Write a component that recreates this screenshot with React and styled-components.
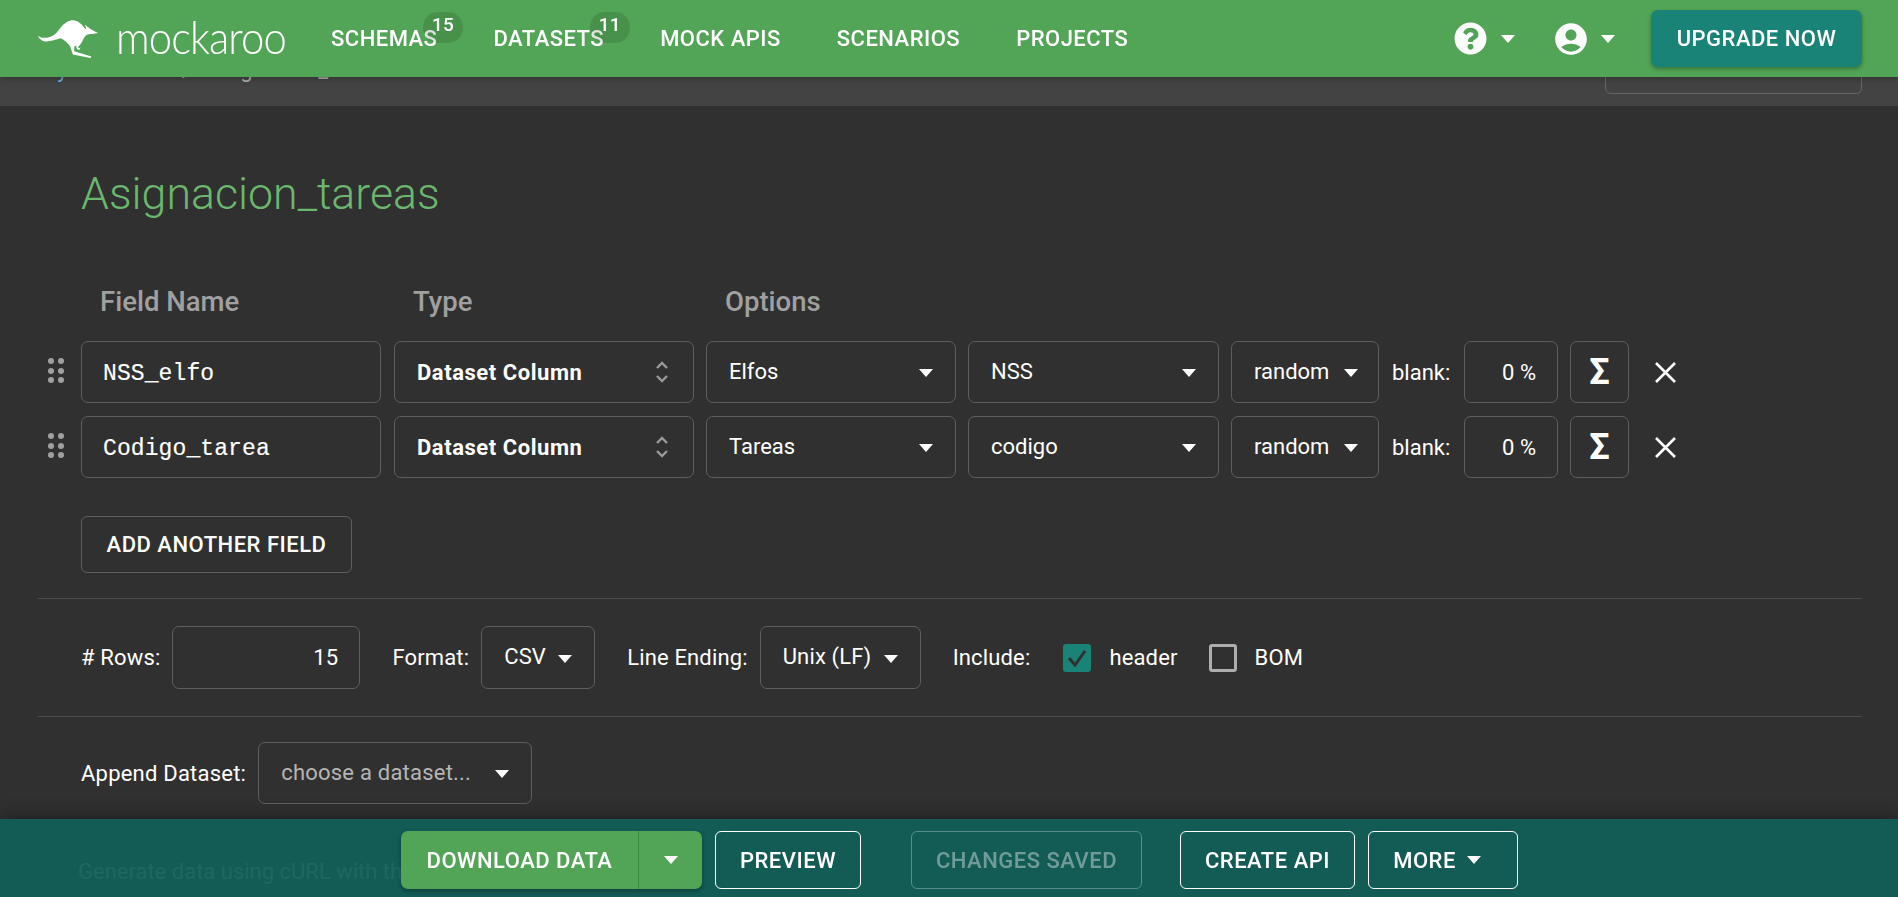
import React from "react";
import styled, { createGlobalStyle } from "styled-components";
import { FaQuestionCircle } from "react-icons/fa";
import { MdAccountCircle } from "react-icons/md";

const Global = createGlobalStyle`
  html, body { margin: 0; height: 100%; overflow: hidden; background: #303030; }
  body { font-family: Roboto, "Liberation Sans", sans-serif; font-size: 22px; color: #fff; }
  * { box-sizing: border-box; }
`;

const Header = styled.header`
  position: fixed; top: 0; left: 0; right: 0; z-index: 5;
  height: 77px; background: #52a556; display: flex; align-items: center;
  padding: 0 36px 0 38px; box-shadow: 0 2px 6px rgba(0,0,0,.25);
`;
const Logo = styled.div`
  display: flex; align-items: center; width: 293px; flex: none;
`;
const Wordmark = styled.span`
  font-family: Lato, sans-serif; font-weight: 300; font-size: 45px; line-height: 50px;
  letter-spacing: -1px; margin-left: 18px; display: inline-block;
  transform: scaleX(.93) translateY(-2px); transform-origin: left center;
`;
const Nav = styled.nav`
  display: flex; gap: 56px; flex: 1;
`;
const NavItem = styled.a`
  position: relative; font-weight: 500; font-size: 22px; letter-spacing: .48px; color: #fff;
  text-transform: uppercase; line-height: 24px; margin-top: 0;
`;
const Badge = styled.span`
  position: absolute; right: -26px; top: -15px; width: 40px; height: 31px; border-radius: 15px;
  background: rgba(0,0,0,.12); font-size: 19px; line-height: 26px; text-align: center;
  padding-right: 1px; letter-spacing: 0;
`;
const IconMenu = styled.div`
  display: flex; align-items: center; gap: 14px; margin-right: ${p => p.$mr}px; font-size: 33px; color: #fff;
  svg { display: block; }
`;
const Caret = styled.span`
  display: inline-block; width: 0; height: 0; flex: none;
  border-left: 7.5px solid transparent;
  border-right: 7.5px solid transparent;
  border-top: 8px solid #fff;
`;
const Upgrade = styled.button`
  width: 211px; height: 57px; border: 0; border-radius: 7px; background: #1a8378; color: #fff;
  font: 500 22px Roboto, sans-serif; letter-spacing: .5px;
  box-shadow: 0 2px 4px rgba(0,0,0,.3);
`;

const Band = styled.div`
  height: 106px; background: #434343; display: flex; align-items: flex-end;
  justify-content: space-between; padding: 0 36px 12px 38px;
`;
const Crumbs = styled.div`
  display: flex; height: 50px; align-items: center; gap: 18px; color: #aaa;
`;
const CrumbLink = styled.a` color: #6fa8dc; `;
const GhostBox = styled.div`
  width: 257px; height: 50px; border: 1px solid #666; border-radius: 6px;
`;

const Main = styled.main`
  padding: 0 36px 0 38px;
`;
const Title = styled.h1`
  margin: 64px 0 0 43px; font-weight: 300; font-size: 44.7px; line-height: 48px; color: #6bb76e;
`;
const ColumnLabels = styled.div`
  display: flex; margin: 72px 0 27px 43px; color: #a0a0a0; font-weight: 500; font-size: 27.5px; line-height: 24px;
`;
const ColumnLabel = styled.div`
  width: ${p => p.$w}px; padding-left: 19px;
`;
const Rows = styled.div`
  display: flex; flex-direction: column; gap: 13px;
`;
const Row = styled.div`
  display: flex; align-items: stretch; height: 62px;
`;
const Handle = styled.div`
  width: 43px; flex: none; padding: 17px 0 0 10px;
  display: grid; grid-template-columns: 6px 6px; grid-auto-rows: 6px; gap: 3.5px 3.5px;
  align-content: start;
  i { width: 6px; height: 6px; border-radius: 50%; background: #a0a0a0; }
`;
const Boxed = styled.div`
  border: 1px solid #5e5e5e; border-radius: 7px; display: flex; align-items: center; flex: none;
  width: ${p => p.$w}px; margin-left: ${p => p.$ml || 0}px;
  ${p => (p.$h ? `height: ${p.$h}px;` : "")}
`;
const NameField = styled(Boxed)`
  padding: 4px 0 0 21px; font-family: "Liberation Mono", monospace; font-size: 23px; letter-spacing: .1px;
  -webkit-text-stroke: .15px #fff;
`;
const TypeSelect = styled(Boxed)`
  padding: 0 24px 0 22px; justify-content: space-between; font-weight: 700; letter-spacing: .55px;
`;
const Select = styled(Boxed)`
  padding: 0 ${p => p.$pr ?? 22}px 2px 22px; justify-content: space-between;
  color: ${p => (p.$muted ? "#b5b5b5" : "#fff")};
  ${Caret} { margin-top: 4px; }
`;
const BlankLabel = styled.span`
  align-self: center; margin-left: 13px; width: 72px; flex: none;
`;
const Percent = styled(Boxed)`
  justify-content: flex-end; padding-right: 21px;
`;
const SumButton = styled(Boxed)`
  justify-content: center; font-size: 36px; font-weight: 700;
`;
const Remove = styled.button`
  background: none; border: 0; padding: 0; width: 72px; color: #fff; flex: none;
  display: flex; align-items: center; justify-content: center;
`;
const AddButton = styled.button`
  display: block; width: 271px; height: 57px; margin: 38px 0 25px 43px; background: none;
  border: 1px solid #5e5e5e; border-radius: 6px; color: #fff;
  font: 500 22px Roboto, sans-serif; letter-spacing: .5px;
`;
const Divider = styled.hr`
  margin: 0; border: 0; height: 1px; background: #4d4d4d;
`;
const OptionsRow = styled.div`
  display: flex; align-items: stretch; gap: 32px; padding: 27px 0 27px 43px; height: 117px;
  letter-spacing: .15px;
`;
const Group = styled.div`
  display: flex; align-items: center; gap: 12px;
`;
const RowsInput = styled(Boxed)`
  height: 63px; justify-content: flex-end; padding-right: 21px;
`;
const Check = styled.span`
  width: 28px; height: 28px; flex: none; border-radius: 3px; display: flex; align-items: center; justify-content: center;
  background: ${p => (p.$on ? "#1a8378" : "transparent")};
  border: ${p => (p.$on ? "0" : "3px solid #adadad")};
  margin: 0 6px 0 ${p => p.$ml}px;
`;
const AppendRow = styled.div`
  display: flex; align-items: center; gap: 12px; height: 62px; margin: 25px 0 0 43px;
  letter-spacing: .22px;
`;
const CurlNote = styled.p`
  margin: 56px 0 0 40px; line-height: 24px; color: #eee; white-space: nowrap;
`;

const Footer = styled.footer`
  position: fixed; left: 0; right: 0; bottom: 0; height: 78px; z-index: 4;
  background: rgba(17,93,87,.94); box-shadow: 0 0 18px rgba(0,0,0,.45);
  display: flex; padding: 12px 0 8px 401px;
`;
const Split = styled.div`
  display: flex; width: 301px; height: 58px; border-radius: 7px; background: #52a556; flex: none;
  box-shadow: 0 2px 4px rgba(0,0,0,.3); margin-right: 13px;
`;
const SplitMain = styled.div`
  width: 238px; display: flex; align-items: center; justify-content: center;
  border-right: 1px solid #3c8a44; font-weight: 500; letter-spacing: .5px;
`;
const SplitCaret = styled.div`
  flex: 1; display: flex; align-items: center; justify-content: center;
`;
const Outline = styled.div`
  height: 58px; width: ${p => p.$w}px; margin-right: ${p => p.$mr}px; flex: none;
  border: 1px solid ${p => (p.$off ? "rgba(255,255,255,.3)" : "#fff")}; border-radius: 6px;
  color: ${p => (p.$off ? "rgba(255,255,255,.4)" : "#fff")};
  display: flex; align-items: center; justify-content: center; gap: 11px;
  font-weight: 500; letter-spacing: .5px;
  padding-right: ${p => p.$shift || 0}px;
`;

const dots = [0, 1, 2, 3, 4, 5];
const Dots = () => (
  <Handle>{dots.map(d => <i key={d} />)}</Handle>
);
const Kangaroo = () => (
  <svg width="60" height="38" viewBox="27 33 181 114" fill="#fff">
    <path d="M27 80C40 90 60 88 75 78C90 68 100 40 125 34C145 30 160 45 168 58L172 60L169 47L185 60L208 72L190 75C180 74 172 76 166 86C160 98 156 106 150 112C146 118 150 120 155 115L153 122C146 124 141 118 143 110L137 112L136 127L188 143L186 147L132 137L124 112C115 100 105 92 95 88C80 92 60 100 45 97C37 95 30 88 27 80Z" />
  </svg>
);
const UpDown = () => (
  <svg width="14" height="24" viewBox="0 0 14 24" fill="none" stroke="#9a9a9a" strokeWidth="2.4">
    <path d="M2 8l5-5 5 5M2 16l5 5 5-5" />
  </svg>
);
const Cross = () => (
  <svg width="23" height="23" viewBox="0 0 23 23" stroke="#fff" strokeWidth="2.6">
    <path d="M2 2l19 19M21 2L2 21" />
  </svg>
);
const Tick = () => (
  <svg width="20" height="18" viewBox="0 0 20 18" fill="none" stroke="#303030" strokeWidth="3">
    <path d="M2 9l6 7L18 2" />
  </svg>
);

const fields = [
  { name: "NSS_elfo", set: "Elfos", col: "NSS" },
  { name: "Codigo_tarea", set: "Tareas", col: "codigo" },
];

export default function App() {
  return (
    <>
      <Global />
      <Header>
        <Logo>
          <Kangaroo />
          <Wordmark>mockaroo</Wordmark>
        </Logo>
        <Nav>
          <NavItem>Schemas<Badge>15</Badge></NavItem>
          <NavItem>Datasets<Badge>11</Badge></NavItem>
          <NavItem>Mock APIs</NavItem>
          <NavItem>Scenarios</NavItem>
          <NavItem>Projects</NavItem>
        </Nav>
        <IconMenu $mr={40}><FaQuestionCircle /><Caret /></IconMenu>
        <IconMenu $mr={36}><MdAccountCircle size={38} style={{ margin: "0 -3px" }} /><Caret /></IconMenu>
        <Upgrade>UPGRADE NOW</Upgrade>
      </Header>

      <Band>
        <Crumbs><CrumbLink>My Schemas</CrumbLink><span>/</span><span>Asignacion_tareas</span></Crumbs>
        <GhostBox />
      </Band>

      <Main>
        <Title>Asignacion_tareas</Title>
        <ColumnLabels>
          <ColumnLabel $w={313}>Field Name</ColumnLabel>
          <ColumnLabel $w={312}>Type</ColumnLabel>
          <ColumnLabel $w={300}>Options</ColumnLabel>
        </ColumnLabels>
        <Rows>
          {fields.map(f => (
            <Row key={f.name}>
              <Dots />
              <NameField $w={300}>{f.name}</NameField>
              <TypeSelect $w={300} $ml={13}>Dataset Column<UpDown /></TypeSelect>
              <Select $w={250} $ml={12}>{f.set}<Caret /></Select>
              <Select $w={251} $ml={12}>{f.col}<Caret /></Select>
              <Select $w={148} $ml={12} $pr={20}>random<Caret /></Select>
              <BlankLabel>blank:</BlankLabel>
              <Percent $w={94}>0 %</Percent>
              <SumButton $w={59} $ml={12}>Σ</SumButton>
              <Remove><Cross /></Remove>
            </Row>
          ))}
        </Rows>
        <AddButton>ADD ANOTHER FIELD</AddButton>
        <Divider />
        <OptionsRow>
          <Group># Rows:<RowsInput $w={188}>15</RowsInput></Group>
          <Group>Format:<Select $w={114} $h={63}>CSV<Caret /></Select></Group>
          <Group>Line Ending:<Select $w={161} $h={63}>Unix (LF)<Caret /></Select></Group>
          <Group>
            Include:
            <Check $on $ml={21}><Tick /></Check>header
            <Check $ml={19} />BOM
          </Group>
        </OptionsRow>
        <Divider />
        <AppendRow>
          Append Dataset:
          <Select $w={274} $h={62} $muted>choose a dataset...<Caret /></Select>
        </AppendRow>
        <CurlNote>Generate data using cURL with this command:</CurlNote>
      </Main>

      <Footer>
        <Split>
          <SplitMain>DOWNLOAD DATA</SplitMain>
          <SplitCaret><Caret /></SplitCaret>
        </Split>
        <Outline $w={146} $mr={50}>PREVIEW</Outline>
        <Outline $w={231} $mr={38} $off>CHANGES SAVED</Outline>
        <Outline $w={175} $mr={13}>CREATE API</Outline>
        <Outline $w={150} $mr={0} $shift={12}>MORE<Caret /></Outline>
      </Footer>
    </>
  );
}
